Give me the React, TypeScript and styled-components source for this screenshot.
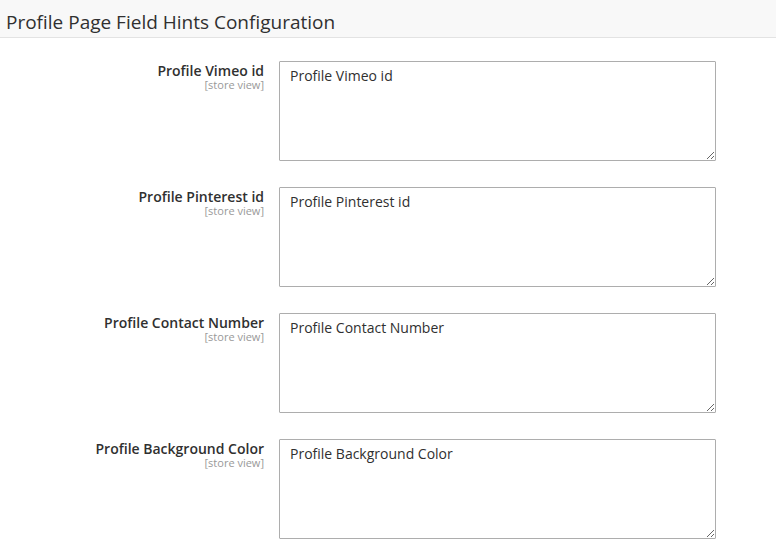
import React from "react";
import styled, { createGlobalStyle } from "styled-components";

const Global = createGlobalStyle`
  html, body { margin: 0; padding: 0; background: #fff; }
  body { font-family: "Open Sans", "Liberation Sans", sans-serif; color: #303030; }
`;

const Header = styled.div`
  height: 37px;
  background: #f8f8f8;
  border-bottom: 1px solid #e3e3e3;
  display: flex;
  align-items: center;
  padding-left: 6px;
`;

const Title = styled.h2`
  margin: 0;
  font-size: 19px;
  font-weight: 400;
  color: #303030;
  line-height: 1;
  padding-top: 8px;
`;

const Form = styled.div`
  display: flex;
  flex-direction: column;
  gap: 26px;
  padding-top: 23px;
`;

const Row = styled.div`
  display: grid;
  grid-template-columns: 264px 437px;
  column-gap: 15px;
`;

const LabelCol = styled.div`
  display: flex;
  flex-direction: column;
  align-items: flex-end;
  text-align: right;
  padding-top: 1px;
`;

const Label = styled.span`
  font-size: 14px;
  font-weight: 600;
  color: #303030;
  line-height: 17px;
`;

const Scope = styled.span`
  font-size: 11px;
  color: #999;
  line-height: 12px;
`;

const Area = styled.textarea`
  box-sizing: border-box;
  width: 437px;
  height: 100px;
  border: 1px solid #adadad;
  border-radius: 1px;
  padding: 4px 10px;
  font-family: "Open Sans", "Liberation Sans", sans-serif;
  font-size: 14px;
  line-height: 19px;
  color: #303030;
  resize: vertical;
  margin: 0;
  outline: none;
  &::placeholder { color: #303030; opacity: 1; }
`;

const fields = [
  "Profile Vimeo id",
  "Profile Pinterest id",
  "Profile Contact Number",
  "Profile Background Color",
];

export default function App() {
  return (
    <>
      <Global />
      <Header>
        <Title>Profile Page Field Hints Configuration</Title>
      </Header>
      <Form>
        {fields.map((f) => (
          <Row key={f}>
            <LabelCol>
              <Label>{f}</Label>
              <Scope>[store view]</Scope>
            </LabelCol>
            <Area defaultValue={f} />
          </Row>
        ))}
      </Form>
    </>
  );
}
